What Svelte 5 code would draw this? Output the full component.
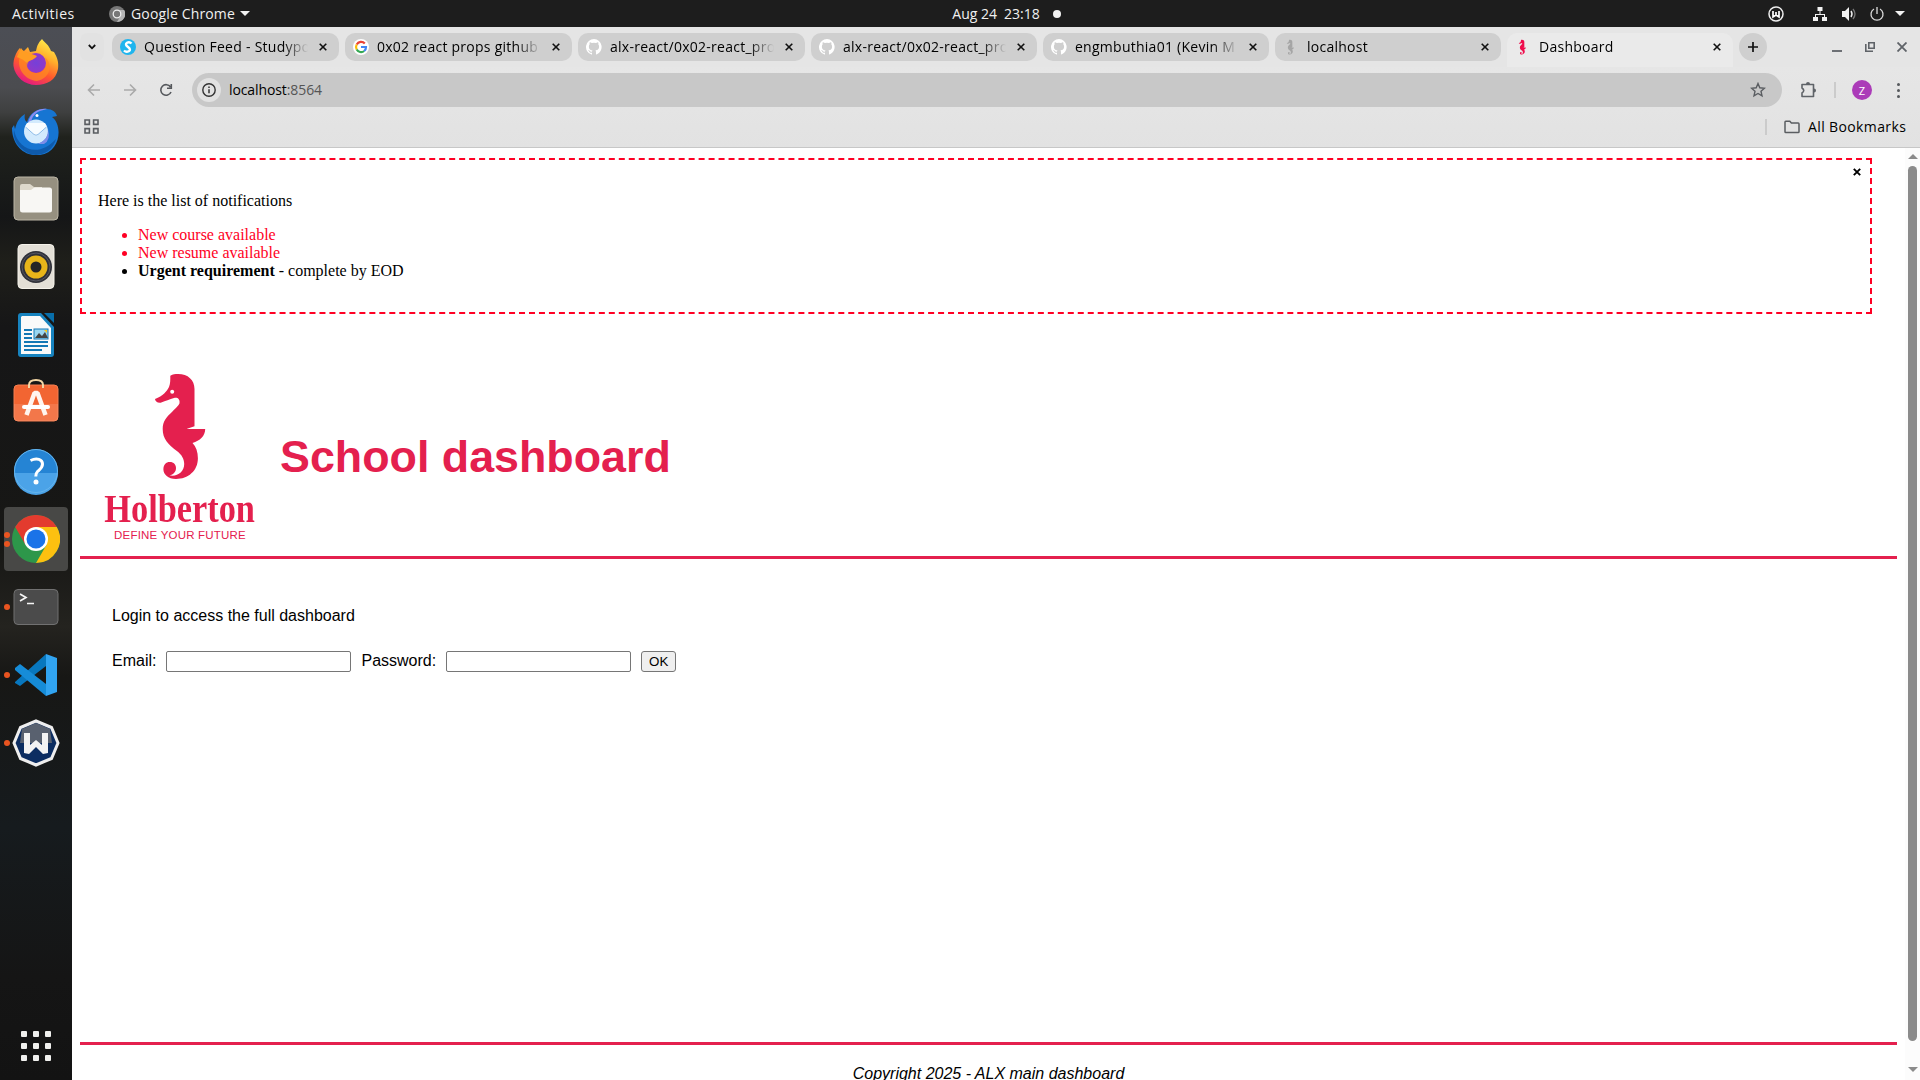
<script>
  const tabs = [
    { title: 'Question Feed - Studypo', icon: 'study', wide: true },
    { title: '0x02 react props github', icon: 'google', wide: true },
    { title: 'alx-react/0x02-react_pro', icon: 'github', wide: true },
    { title: 'alx-react/0x02-react_pro', icon: 'github' },
    { title: 'engmbuthia01 (Kevin M', icon: 'github' },
    { title: 'localhost', icon: 'horse-grey' },
    { title: 'Dashboard', icon: 'horse', active: true }
  ];
  const horse =
    'M15.300 1.700C18 .3 20 0 23 0C33 0 39.500 6 39.500 15V52.300L32.100 54.700V55.100H50.200C50.200 62 45 67 37.500 69C41 72.500 42.900 78 42.900 84.300C42.900 97 33 105 21 105C13 105 8.400 100 8.400 95.500C8.400 90.500 11 88 14.800 88C18.800 88 21 90.700 21 94C21 98 18.500 100.500 14.500 101.300C22 103 29.200 98 29.200 90C29.200 85 26.500 80.500 22.200 77.300C13 70 7.700 65 7.700 55C7.700 47 11.500 43 17.200 37.700C21 34 24.500 30.500 24.500 29C25 25 22.500 23 19 24C12 26.500 9 27.500 5.700 28.700C2 29 0 27 0 25C8 22 12 17 14 13C15.500 9 15.300 6 15.300 1.700Z';
</script>

<div class="screen">
  <header class="topbar">
    <span class="activities">Activities</span>
    <span class="app">
      <svg width="16" height="16" viewBox="0 0 16 16"><circle cx="8" cy="8" r="8" fill="#777" /><path d="M8 4h7.200A8 8 0 0 1 8 16l3.500-6z" fill="#b5b5b5" /><circle cx="8" cy="8" r="3.800" fill="#777" stroke="#eee" stroke-width="1.300" /></svg>
      <span class="appname">Google Chrome</span><i class="caret"></i>
    </span>
    <span class="clock">Aug 24&ensp;23:18<i class="dot"></i></span>
    <span class="tray">
      <svg class="windscribe" width="16" height="18" viewBox="0 0 16 18"><circle cx="8" cy="9" r="7" fill="none" stroke="#eee" stroke-width="1.500" /><path d="M5 6v6L8 10l3 2V6M8 10V7" fill="none" stroke="#fff" stroke-width="1.700" /></svg>
      <svg class="net" width="16" height="16" viewBox="0 0 16 16" fill="#f2f2f2"><path d="M5.500 1h5v4h-5zM1 11h5v4H1zM10 11h5v4h-5zM7.500 5h1v3H13v3h-1V9H4v2H3V8h4.500z" /></svg>
      <svg class="vol" width="16" height="16" viewBox="0 0 16 16"><path d="M1 5h3l4-4v14l-4-4H1z" fill="#f2f2f2" /><path d="M10 5q2 3 0 6" fill="none" stroke="#eee" stroke-width="1.500" /><path d="M12 3q4 5 0 10" fill="none" stroke="#777" stroke-width="1.300" /></svg>
      <svg class="power" width="16" height="16" viewBox="0 0 16 16" fill="none" stroke="#ddd" stroke-width="1.300"><path d="M8 1v7M5 3a6 6 0 1 0 6 0" /></svg>
      <i class="caret"></i>
    </span>
  </header>

  <div class="body">
    <nav class="dock">
      <div class="slot">
        <svg width="48" height="48" viewBox="0 1 48 48">
          <defs>
            <linearGradient id="fx" x1=".8" y1="0" x2=".3" y2="1"><stop offset="0" stop-color="#fff44f" /><stop offset=".35" stop-color="#ffb02c" /><stop offset=".65" stop-color="#ff5a2c" /><stop offset="1" stop-color="#e31587" /></linearGradient>
            <radialGradient id="fp"><stop offset="0" stop-color="#7540d8" /><stop offset="1" stop-color="#9238c8" /></radialGradient>
          </defs>
          <path d="M30 1c3 4 7 6 9 12l3 1c3 5 5 10 4 17-2 11-11 16-22 16S3 39 1.500 28C1 21 4 15 7 11l1-1 2 5 4-4 2-2 2 5 6-1C25 7 27 4 30 1Z" fill="url(#fx)" />
          <circle cx="24" cy="25" r="10" fill="url(#fp)" />
          <path d="M8 18c5-3 10 0 16 0-1 4-8 4-8 7-3 4 2 10 8 10 8 0 13-7 9-16 8 7 6 21-8 24C12 42 4 29 8 18Z" fill="#ff8a20" opacity=".75" />
          <path d="M9 10c3 5 10 5 16 8-2 4-9 4-10 7-4-4-8-5-10-6z" fill="#ff9d22" />
        </svg>
      </div>
      <div class="slot">
        <svg width="48" height="48" viewBox="0 -1 48 48">
          <path d="M15 14C18 4 27 0 35 1c5 0 9 3 10 7l-5 1c11 8 9 35-12 38C12 49 0 37 0 20l2-3 1 4C5 13 8 9 13 6c-1 4 0 7 2 8Z" fill="#1675d2" />
          <path d="M16 15C18 4 28 0 35 1L28 3c-5 2-8 6-9 11z" fill="#8b8cf0" />
          <path d="M2 22c4 20 25 28 42 9-4 16-23 21-34 10C4 36 1 30 2 22Z" fill="#0e5aab" />
          <circle cx="24" cy="23.500" r="12" fill="#d2eafd" /><path d="M15 15h18l2 4-9 8q-2 2-4 0l-9-8z" fill="#f7fcff" /><path d="m13.500 19 8.500 7.500q2 1.500 4 0l8.500-7.500" fill="none" stroke="#87b9e8" /><circle cx="25" cy="7.500" r="1.500" fill="#fff" /><path d="M36 21q1 10-10 15h6q7-4 4-15Z" fill="#7c8ce8" />
        </svg>
      </div>
      <div class="slot">
        <svg width="48" height="48" viewBox="0 0 48 48"><rect x="2" y="2" width="44" height="43" rx="4" fill="#969080" stroke="#bbb5a5" /><path d="M8 19V11q0-2 2-2h8l4 3h8v9z" fill="#ded9cc" /><rect x="8" y="12.500" width="32" height="25" rx="2.500" fill="#f8f7f4" /><path d="M8 15h11l4-3H8z" fill="#ded9cc" /></svg>
      </div>
      <div class="slot">
        <svg width="48" height="48" viewBox="0 0 48 48"><rect x="6" y="1.500" width="36" height="44" rx="4" fill="#e3dfd6" stroke="#f5f2ea" /><circle cx="24" cy="24" r="16" fill="#303139" /><circle cx="24" cy="24" r="14" fill="none" stroke="#565761" /><circle cx="24" cy="24" r="11.500" fill="#e8b51a" /><circle cx="24" cy="24" r="5.500" fill="#252526" /></svg>
      </div>
      <div class="slot">
        <svg width="48" height="48" viewBox="0 -1 48 48"><path d="M9 1h20l13 14v27q0 3-3 3H9q-3 0-3-3V4q0-3 3-3Z" fill="#1783bf" /><path d="M10 4h18l11 12v26H9V5z" fill="#fafafa" /><path d="M32 1h10v10z" fill="#086eaa" /><path d="M12 18h8M12 22h8M12 26h8M12 30h24M12 34h24M12 38h18" stroke="#1478b5" stroke-width="2" /><rect x="22" y="17" width="14" height="10" fill="#9ad6f1" stroke="#1478b5" /><path d="m23 26 4-5 3 3 3-4 3 6z" fill="#444" /><path d="M32 18h3v3z" fill="#f7c71b" /></svg>
      </div>
      <div class="slot">
        <svg width="48" height="48" viewBox="0 -1 48 48"><rect x="2" y="5" width="44" height="36" rx="4" fill="#f26532" stroke="#f57f51" /><path d="M2 24h44v13q0 4-4 4H6q-4 0-4-4z" fill="#fff" opacity=".12" /><path d="M17 8V5q0-5 7-5t7 5v3" fill="none" stroke="#f3d6a5" stroke-width="2" /><path d="m14.500 35 8-22h3l8 22" fill="none" stroke="#fff5ef" stroke-width="4.500" stroke-linejoin="bevel" /><rect x="10" y="25" width="28" height="4" rx="2" fill="#fff" /></svg>
      </div>
      <div class="slot">
        <svg width="48" height="48" viewBox="0 0 48 48"><circle cx="24" cy="24" r="22" fill="#2584d4" /><path d="M2 26a22 22 0 0 0 44 0z" fill="#4ba3e8" /><circle cx="24" cy="24" r="21.500" fill="none" stroke="#65b4ec" /><path d="M18.500 13.500C25 10.500 30.500 12.500 30.500 17c0 4-3 5.500-5 7.500-1.500 1.500-1.700 3-1.700 5" fill="none" stroke="#fff" stroke-width="3" /><circle cx="24" cy="35" r="2.500" fill="#fff" /></svg>
      </div>
      <div class="slot current">
        <span class="run"><i></i><i></i></span>
        <svg width="48" height="48" viewBox="0 0 48 48"><circle cx="24" cy="24" r="24" fill="#2d974a" /><path d="M3.200 12A24 24 0 0 1 44.800 12H24L13.600 30Z" fill="#e33b2e" /><path d="M44.800 12A24 24 0 0 1 24 48L34.400 30 24 12Z" fill="#fcc010" /><circle cx="24" cy="24" r="12" fill="#fff" /><circle cx="24" cy="24" r="9.500" fill="#1a73e8" /></svg>
      </div>
      <div class="slot">
        <span class="run"><i></i></span>
        <svg width="48" height="48" viewBox="0 0 48 48"><rect x="2" y="6.500" width="44" height="35" rx="4" fill="#4b4b4b" stroke="#717171" /><path d="m8 11 6 3.500L8 18M15 20.500h7" fill="none" stroke="#f5f5f5" stroke-width="1.700" /></svg>
      </div>
      <div class="slot">
        <span class="run"><i></i></span>
        <svg width="48" height="48" viewBox="0 0 48 48"><path d="M3 31 34 3v12L8 35 3 32z" fill="#0877be" /><path d="m3 17 5-4 26 20v12L3 19z" fill="#168cd8" /><path d="m34 3 11 4v34l-11 4z" fill="#31a4f1" /></svg>
      </div>
      <div class="slot">
        <span class="run"><i></i></span>
        <svg width="48" height="48" viewBox="0 0 48 48"><path d="m24 2 15.500 6.500L46 24l-6.500 15.500L24 46 8.500 39.500 2 24 8.500 8.500Z" fill="#0c2d61" stroke="#eee" stroke-width="3" /><path d="M24 4 38 10l2 14H8l2-14z" fill="#59616f" /><path d="M12 14h6v12l6-5 6 5V14h6v20l-5 1-7-7-7 7-5-1z" fill="#f3f3f3" /></svg>
      </div>
      <div class="grid">{#each Array(9) as _}<i></i>{/each}</div>
    </nav>

    <main class="browser">
      <div class="tabstrip">
        <span class="search"><svg width="8" height="6" viewBox="0 0 8 6"><path d="m.8 1 3.200 3.300L7.200 1" fill="none" stroke="#111" stroke-width="1.800" /></svg></span>
        {#each tabs as tab}
          <div class="tab" class:wide={tab.wide} class:active={tab.active}>
            <svg class="fav" width="16" height="16" viewBox="0 0 16 16">
              {#if tab.icon === 'study'}
                <circle cx="8" cy="8" r="8" fill="#1fb5ee" /><path d="M11.500 4.500Q9.500 2.300 7 3.800T8 8t.8 4.200T4 11.500" fill="none" stroke="#fff" stroke-width="2.400" />
              {:else if tab.icon === 'google'}
                <circle cx="8" cy="8" r="8" fill="#fff" /><g fill="none" stroke-width="2.200"><path d="M11.800 4.500A5 5 0 0 0 3.700 5.500" stroke="#ea4335" /><path d="M3.700 5.500a5 5 0 0 0 0 5" stroke="#fbbc05" /><path d="M3.700 10.500a5 5 0 0 0 7.500 1.500" stroke="#34a853" /><path d="M11.200 12A5 5 0 0 0 13 8H8" stroke="#4285f4" /></g>
              {:else if tab.icon === 'github'}
                <path fill="#fff" d="M8 0a8 8 0 0 0-2.530 15.590c.4.070.55-.17.55-.38v-1.490C3.800 14.200 3.300 12.650 3.300 12.650c-.36-.92-.9-1.170-.9-1.170-.72-.5.060-.49.060-.49.800.060 1.230.82 1.230.82.710 1.220 1.870.87 2.330.66.070-.52.280-.87.500-1.070-1.770-.2-3.640-.89-3.640-3.950 0-.87.310-1.590.82-2.150-.08-.2-.36-1.020.08-2.120 0 0 .67-.21 2.200.82a7.600 7.600 0 0 1 4 0c1.530-1.040 2.200-.82 2.200-.82.440 1.100.160 1.920.080 2.120.510.560.820 1.270.820 2.150 0 3.070-1.870 3.750-3.650 3.950.290.250.540.730.540 1.480v2.190c0 .21.150.46.550.38A8 8 0 0 0 8 0Z" />
              {:else}
                <g transform="translate(3.800 .8) scale(.14)"><path d={horse} fill={tab.active ? '#ef0d4c' : '#a5a5a5'} /></g>
              {/if}
            </svg>
            <span class="title">{tab.title}</span>
            <svg class="close" width="8" height="8" viewBox="0 0 8 8"><path d="m.7.7 6.600 6.600M7.300.7.700 7.300" stroke="#111" stroke-width="1.600" /></svg>
          </div>
        {/each}
        <span class="plus"><svg width="10" height="10" viewBox="0 0 10 10"><path d="M5 0v10M0 5h10" stroke="#111" stroke-width="1.700" /></svg></span>
        <span class="winctl">
          <svg width="10" height="10" viewBox="0 0 10 10"><path d="M0 9h10" stroke="#5f6368" stroke-width="1.800" /></svg>
          <svg width="10" height="10" viewBox="0 0 10 10" fill="none" stroke="#5f6368" stroke-width="1.600"><path d="M3.800.8h5.400v5.400H3.800zM.8 2v7.200H8" /></svg>
          <svg width="10" height="10" viewBox="0 0 10 10"><path d="m.5.5 9 9M9.500.5l-9 9" stroke="#5f6368" stroke-width="1.800" /></svg>
        </span>
      </div>

      <div class="toolbar">
        <svg class="nav" width="14" height="14" viewBox="0 0 14 14" fill="none" stroke="#aaa" stroke-width="1.600"><path d="M13 7H2M7 1.500 1.500 7 7 12.500" /></svg>
        <svg class="nav" width="14" height="14" viewBox="0 0 14 14" fill="none" stroke="#aaa" stroke-width="1.600"><path d="M1 7h11M7 1.500 12.500 7 7 12.500" /></svg>
        <svg class="nav" width="14" height="14" viewBox="0 0 14 14" fill="none" stroke="#55585c" stroke-width="1.600"><path d="M12 9A5.300 5.300 0 1 1 11.500 4M12.300 1v4.300H8" /></svg>
        <div class="omni">
          <span class="info"><svg width="14" height="14" viewBox="0 0 14 14"><circle cx="7" cy="7" r="6.200" fill="none" stroke="#333" stroke-width="1.400" /><path d="M7 6.200v4M7 3.500v1.500" stroke="#333" stroke-width="1.500" /></svg></span>
          <span class="url">localhost<b>:8564</b></span>
          <svg class="star" width="16" height="16" viewBox="0 0 16 16"><path d="m8 1.500 1.800 4.300 4.700.4L11 9.300l1 4.600-4-2.400-4 2.400 1-4.600L1.500 6.200l4.700-.4Z" fill="none" stroke="#5a5d61" stroke-width="1.400" /></svg>
        </div>
        <svg class="ext" width="18" height="18" viewBox="0 0 18 18"><path d="M2 3.500H13.500V15.500H2V12q3.500-2.500 0-5z" fill="none" stroke="#5f6368" stroke-width="1.600" stroke-linejoin="round" /><path d="M6 3a2 2 0 0 1 4 0zM14 7.500a2 2 0 0 1 0 4z" fill="#5f6368" /></svg>
        <i class="sep"></i>
        <span class="avatar">Z</span>
        <span class="kebab"><i></i><i></i><i></i></span>
      </div>

      <div class="bookmarks">
        <svg width="15" height="15" viewBox="0 0 15 15" fill="none" stroke="#5a5d61" stroke-width="1.600"><path d="M1 1h4.400v4.400H1zM9.600 1H14v4.400H9.600zM1 9.600h4.400V14H1zM9.600 9.600H14V14H9.600z" /></svg>
        <i class="sep"></i>
        <svg class="folder" width="16" height="14" viewBox="0 0 16 14"><path d="M1.800 1.300h4l1.600 1.800h6.800q.8 0 .8.800v7.800q0 .8-.8.800H1.800q-.8 0-.8-.8V2.100q0-.8.8-.8Z" fill="none" stroke="#5a5d61" stroke-width="1.500" /></svg>
        <span class="all">All Bookmarks</span>
      </div>

      <div class="viewport">
        <div class="page">
          <section class="notes">
            <svg class="x" width="8" height="8" viewBox="0 0 8 8"><path d="m.8.8 6.400 6.400M7.200.8.800 7.200" stroke="#000" stroke-width="1.900" /></svg>
            <p>Here is the list of notifications</p>
            <ul>
              <li class="red">New course available</li>
              <li class="red">New resume available</li>
              <li><strong>Urgent requirement</strong> - complete by EOD</li>
            </ul>
          </section>
          <div class="head">
            <div class="logo">
              <svg width="51" height="105" viewBox="0 0 51 105"><path d={horse} fill="#e4204e" /><circle cx="17.200" cy="17.700" r="2" fill="#fff" /></svg>
              <span class="name">Holberton</span>
              <span class="tag">DEFINE YOUR FUTURE</span>
            </div>
            <h1>School dashboard</h1>
          </div>
          <div class="login">
            <p>Login to access the full dashboard</p>
            <form>
              <label for="email">Email:</label><input id="email" type="text" />
              <label for="pw">Password:</label><input id="pw" type="password" />
              <button type="button">OK</button>
            </form>
          </div>
          <footer>Copyright 2025 - ALX main dashboard</footer>
        </div>
        <div class="scroll"><i class="up"></i><i class="thumb"></i><i class="down"></i></div>
      </div>
    </main>
  </div>
</div>

<style>
  :global(body) { margin: 0; overflow: hidden; }
  * { box-sizing: border-box; }
  svg { display: block; flex: none; }
  i { flex: none; }
  .screen { width: 1920px; height: 1080px; display: flex; flex-direction: column; overflow: hidden; font-family: 'Open Sans', 'Noto Sans', sans-serif; }
  .topbar { height: 27px; flex: none; background: #1d1d1d; color: #f0f0f0; font-size: 14px; display: grid; grid-template-columns: 109px 1fr auto 1fr; align-items: center; white-space: nowrap; line-height: 18px; }
  .activities { padding-left: 12px; letter-spacing: .5px; }
  .app { display: flex; align-items: center; }
  .appname { margin-left: 6px; letter-spacing: .15px; }
  .caret { border: 5px solid transparent; border-top-color: #f2f2f2; border-bottom: 0; margin-left: 5px; }
  .clock { display: flex; align-items: center; margin-right: 8px; margin-left: -8px; }
  .dot { width: 8px; height: 8px; border-radius: 50%; background: #f2f2f2; margin-left: 13px; }
  .tray { display: flex; align-items: center; justify-content: flex-end; padding-right: 15px; }
  .net { margin-left: 28px; }
  .vol { margin-left: 13px; }
  .power { margin-left: 11.500px; }
  .tray .caret { margin-left: 10.500px; }
  .body { flex: 1; display: flex; min-height: 0; }
  .dock { width: 72px; flex: none; display: flex; flex-direction: column; align-items: center; gap: 4px; padding-top: 4px; background: linear-gradient(#4c4e55 0, #4b4c50 60px, #3f4040 85px, #20221d 110px, #1a1c1a 150px, #151617 190px, #1f1f1a 235px, #161617 300px, #171715 520px, #24231f 600px, #171715 650px, #161b1e 800px, #151515 950px, #131313); }
  .slot { width: 64px; height: 64px; display: flex; align-items: center; justify-content: center; position: relative; border-radius: 4px; }
  .current { background: #484846; }
  .run { position: absolute; left: 0; top: 0; height: 100%; width: 6px; display: flex; flex-direction: column; justify-content: center; gap: 3px; }
  .run i { width: 6px; height: 6px; border-radius: 50%; background: #e95420; }
  .grid { display: grid; grid-template-columns: repeat(3, 6px); gap: 6px; margin-top: auto; margin-bottom: 19px; }
  .grid i { width: 6px; height: 6px; border-radius: 1px; background: #f0f0ee; }
  .browser { flex: 1; min-width: 0; display: flex; flex-direction: column; background: linear-gradient(#e8e8e8, #e2e2e2 121px); color: #000; }
  .tabstrip { height: 40px; flex: none; display: flex; align-items: flex-start; padding: 6px 8px 0; background: #e5e5e5; }
  .search { width: 24px; height: 28px; display: flex; align-items: center; justify-content: center; margin-right: 8px; background: #e2e2e2; border-radius: 8px; }
  .tab { width: 226px; height: 28px; margin-right: 6px; flex: none; border-radius: 10px; background: #cfcfcf; display: flex; align-items: center; padding: 0 12px 0 8px; font-size: 14px; }
  .tab.wide { width: 227px; }
  .tab.active { background: #eaeaea; height: 34px; border-radius: 10px 10px 0 0; padding-bottom: 6px; }
  .title { flex: 1; margin: 0 10px 0 8px; overflow: hidden; white-space: nowrap; letter-spacing: .26px; line-height: 20px; font-weight: 450; mask-image: linear-gradient(90deg, #000 calc(100% - 26px), transparent calc(100% - 1px)); }
  .plus { width: 28px; height: 28px; border-radius: 14px; background: #cfcfcf; display: flex; align-items: center; justify-content: center; }
  .winctl { flex: 1; height: 28px; display: flex; justify-content: flex-end; align-items: center; gap: 22.500px; padding-right: 5px; }
  .toolbar { height: 46px; flex: none; display: flex; align-items: center; padding-left: 15px; }
  .nav { margin-right: 22px; }
  .omni { width: 1590px; height: 34px; border-radius: 17px; background: #c8c8c8; display: flex; align-items: center; padding: 0 16px 0 5px; margin-left: -3px; font-size: 14px; }
  .info { width: 24px; height: 24px; border-radius: 12px; background: #e2e2e2; display: flex; align-items: center; justify-content: center; }
  .url { margin-left: 8px; flex: 1; letter-spacing: -.1px; padding-bottom: 1px; }
  .url b { font-weight: 400; color: #555; }
  .ext { margin-left: 18px; }
  .sep { width: 2px; height: 16px; background: #cbcbcb; }
  .toolbar .sep { margin-left: 16px; }
  .avatar { width: 20px; height: 20px; border-radius: 50%; background: #ab3bb8; color: #fff; font-size: 11px; display: flex; align-items: center; justify-content: center; margin-left: 16px; }
  .kebab { display: flex; flex-direction: column; gap: 3px; margin-left: 24.500px; }
  .kebab i { width: 3px; height: 3px; border-radius: 50%; background: #55585c; }
  .bookmarks { height: 35px; flex: none; display: flex; align-items: center; padding: 0 14px 7px 12px; border-bottom: 1px solid #c7c7c7; font-size: 14px; }
  .bookmarks .sep { margin-left: auto; }
  .folder { margin-left: 17px; }
  .all { margin-left: 8px; font-weight: 500; width: 98px; letter-spacing: .38px; white-space: nowrap; }
  .viewport { flex: 1; min-height: 0; display: flex; background: #fff; color: #000; }
  .page { flex: 1; padding: 10px 8px 0; overflow: hidden; display: flex; flex-direction: column; font: 16px/18px 'Liberation Serif', serif; }
  .notes { width: 1792px; height: 156px; flex: none; border: 2px dashed #ff0024; padding: 16px; position: relative; }
  .notes p { margin: 16px 0; }
  .notes ul { margin: 16px 0; padding-left: 40px; }
  .red { color: #ff0024; }
  .x { position: absolute; right: 9px; top: 8px; }
  .head { height: 245px; flex: none; border-bottom: 3px solid #e4204e; display: flex; font-family: 'Liberation Sans', sans-serif; color: #e4204e; }
  .logo { width: 200px; padding-top: 60px; display: flex; flex-direction: column; align-items: center; }
  .name { font: 700 39px/40px 'Liberation Serif', serif; margin-top: 10px; transform: scaleX(.88); }
  .tag { font: 11.500px/12px 'Liberation Sans', sans-serif; letter-spacing: .2px; white-space: nowrap; }
  h1 { font-size: 44.800px; line-height: 50px; margin: 117px 0 0; }
  .login { flex: 1; padding: 48px 32px 0; font-family: 'Liberation Sans', sans-serif; }
  .login p { margin: 0; }
  form { display: flex; align-items: center; margin-top: 24px; height: 24px; }
  input { width: 185px; height: 21px; margin: 0 10px 0 10px; border: 1px solid #767676; border-radius: 2px; padding: 0; background: #fff; }
  button { width: 35px; height: 21px; padding: 0; border: 1px solid #767676; border-radius: 3px; background: #efefef; font: 13.333px 'Liberation Sans', sans-serif; color: #000; }
  footer { height: 38px; flex: none; border-top: 3px solid #e4204e; padding-top: 20px; text-align: center; font: italic 16px/18px 'Liberation Sans', sans-serif; }
  .scroll { width: 15px; flex: none; background: #fcfcfc; display: flex; flex-direction: column; align-items: center; padding: 6px 0 8px; }
  .up { border: 5px solid transparent; border-bottom-color: #8b8b8b; border-top: 0; }
  .thumb { width: 9px; height: 875px; border-radius: 5px; background: #8b8b8b; margin-top: 7px; }
  .down { border: 5px solid transparent; border-top-color: #8b8b8b; border-bottom: 0; margin-top: auto; }
</style>
